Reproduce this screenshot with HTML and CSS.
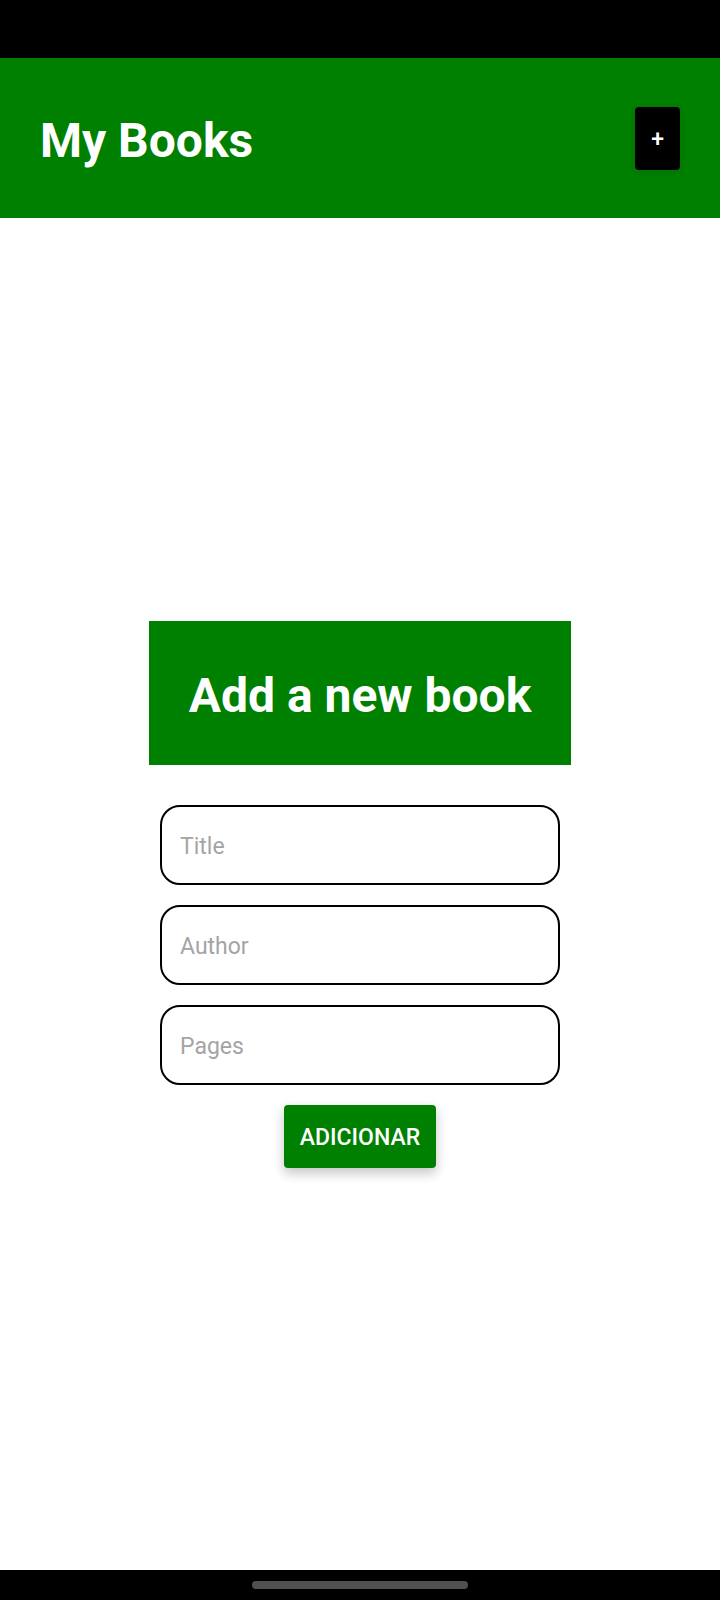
FILE: index.html
```html
<!DOCTYPE html>
<html lang="en">
<head>
<meta charset="utf-8">
<meta name="viewport" content="width=device-width, initial-scale=1">
<title>My Books</title>
<link rel="stylesheet" href="styles.css">
</head>
<body>
<div class="status-bar"></div>
<header class="header">
<h1 class="heading">My Books</h1>
<button class="button button-dark" type="button" aria-label="Add book">+</button>
</header>
<main class="main">
<h2 class="heading banner">Add a new book</h2>
<form class="form">
<input class="field" type="text" placeholder="Title" aria-label="Title">
<input class="field" type="text" placeholder="Author" aria-label="Author">
<input class="field" type="text" inputmode="numeric" placeholder="Pages" aria-label="Pages">
<button class="button button-green" type="button">ADICIONAR</button>
</form>
</main>
<footer class="nav-bar"><div class="handle"></div></footer>
</body>
</html>
```
FILE: styles.css
```css
* { box-sizing: border-box; }
body {
  margin: 0;
  min-height: 100vh;
  display: flex;
  flex-direction: column;
  background: #fff;
  font-family: Roboto, sans-serif;
}
.status-bar { height: 58px; background: #000; }
.header {
  display: flex;
  align-items: center;
  justify-content: space-between;
  height: 160px;
  padding: 0 40px;
  background: #008000;
}
.heading {
  margin: 0;
  padding-top: 6px;
  color: #fff;
  font-size: 48px;
  line-height: 58px;
  font-weight: 700;
}
.main {
  flex: 1;
  display: flex;
  flex-direction: column;
  align-items: center;
  justify-content: center;
  gap: 40px;
}
.banner { padding: 46px 40px 40px; background: #008000; }
.form {
  display: flex;
  flex-direction: column;
  align-items: center;
  gap: 20px;
}
.field {
  width: 400px;
  max-width: 100%;
  height: 80px;
  padding: 4px 18px 0;
  border: 2px solid #000;
  border-radius: 20px;
  background: #fff;
  font: 400 23px/28px Roboto, sans-serif;
}
.field::placeholder { color: #a4a4a4; opacity: 1; }
.button {
  border: 0;
  border-radius: 4px;
  padding: 18px 16px 15px;
  color: #fff;
  font: 500 23px/30px Roboto, sans-serif;
}
.button-dark { background: #000; box-shadow: 0 2px 8px rgba(0, 0, 0, 0.12); }
.button-green { background: #008000; box-shadow: 0 5px 12px rgba(0, 0, 0, 0.24); }
.nav-bar {
  display: flex;
  align-items: center;
  justify-content: center;
  height: 30px;
  background: #000;
}
.handle {
  width: 30%;
  height: 8px;
  border-radius: 4px;
  background: #505050;
}
```
